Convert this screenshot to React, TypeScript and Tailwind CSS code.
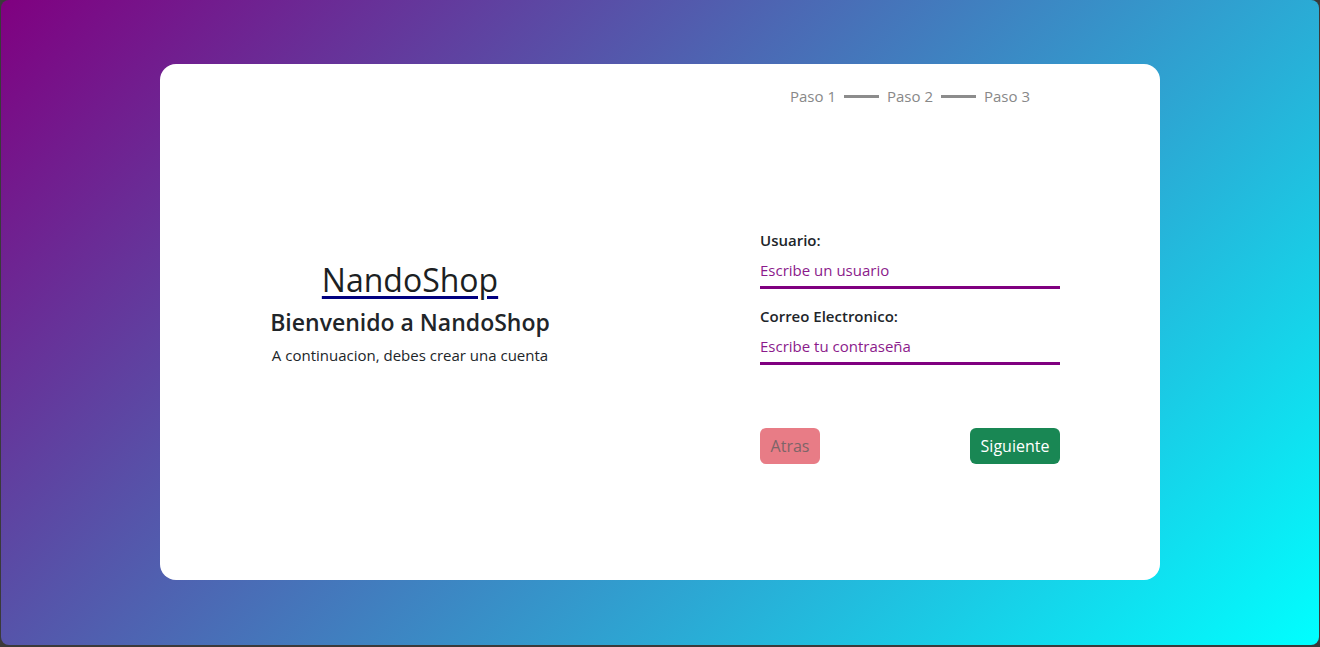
import React from "react"

const FONT = "font-['Segoe_UI','Open_Sans','Noto_Sans',sans-serif]"

function Steps() {
  const steps = ["Paso 1", "Paso 2", "Paso 3"]
  return (
    <div className="flex items-center justify-center gap-2 text-[15px] text-[#888888]">
      {steps.map((s, i) => (
        <React.Fragment key={s}>
          {i > 0 && <span className="h-[3px] w-[35px] bg-[#8c8c8c]" />}
          <span>{s}</span>
        </React.Fragment>
      ))}
    </div>
  )
}

function Field({ label, placeholder }: { label: string; placeholder: string }) {
  return (
    <div className="flex flex-col">
      <label className="text-[15px] font-semibold leading-[22px] text-[#212529]">{label}</label>
      <input
        placeholder={placeholder}
        className="mt-[2px] h-[36px] border-b-[3px] border-[#800080] bg-transparent text-[15px] text-[#800080] outline-none placeholder:text-[#8b1a8b]"
      />
    </div>
  )
}

export default function App() {
  return (
    <div className={`h-[647px] w-full bg-[#3a3a3a] pl-px pr-px pb-[2px] ${FONT}`}>
      <div className="flex h-full w-full items-center justify-center rounded-lg bg-[linear-gradient(135deg,#800080,#00ffff)]">
        <div className="mb-px grid h-[516px] w-[1000px] grid-cols-2 rounded-2xl bg-white">
          {/* Left: welcome */}
          <div className="flex flex-col items-center justify-center pb-[16px] text-center text-[#212529]">
            <a href="#" className="text-[32px] leading-[38px] text-[#1c1f23] underline decoration-[#000080] decoration-[3px] underline-offset-[4px]">
              NandoShop
            </a>
            <h2 className="mt-[8px] text-[23px] font-semibold leading-[30px]">Bienvenido a NandoShop</h2>
            <p className="mt-[6px] text-[15px] leading-[24px]">A continuacion, debes crear una cuenta</p>
          </div>

          {/* Right: form */}
          <div className="flex flex-col pt-[21px]">
            <Steps />
            <div className="flex flex-1 items-center justify-center pt-[6px]">
              <div className="flex w-[300px] flex-col">
                <div className="flex flex-col gap-[16px]">
                  <Field label="Usuario:" placeholder="Escribe un usuario" />
                  <Field label="Correo Electronico:" placeholder="Escribe tu contraseña" />
                </div>
                <div className="mt-[63px] flex items-center justify-between">
                  <button disabled className="h-[36px] w-[60px] rounded-md bg-[#e87c86] text-[16px] text-[#7d6568]">
                    Atras
                  </button>
                  <button className="h-[36px] w-[90px] rounded-md bg-[#198754] text-[16px] text-white">
                    Siguiente
                  </button>
                </div>
              </div>
            </div>
          </div>
        </div>
      </div>
    </div>
  )
}
